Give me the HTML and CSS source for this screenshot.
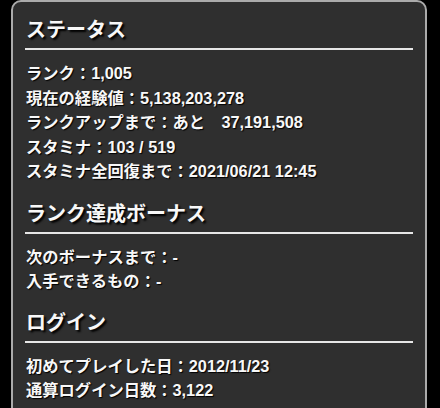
FILE: index.html
```html
<!DOCTYPE html>
<html lang="ja">
<head>
<meta charset="utf-8">
<link rel="stylesheet" href="styles.css">
</head>
<body>
<div class="panel">
  <section class="sec sec-first">
    <h2 class="title">ステータス</h2>
    <ul class="rows">
      <li>ランク：1,005</li>
      <li>現在の経験値：5,138,203,278</li>
      <li>ランクアップまで：あと　37,191,508</li>
      <li>スタミナ：103 / 519</li>
      <li>スタミナ全回復まで：2021/06/21 12:45</li>
    </ul>
  </section>
  <section class="sec">
    <h2 class="title">ランク達成ボーナス</h2>
    <ul class="rows">
      <li>次のボーナスまで：-</li>
      <li>入手できるもの：-</li>
    </ul>
  </section>
  <section class="sec sec-last">
    <h2 class="title">ログイン</h2>
    <ul class="rows">
      <li>初めてプレイした日：2012/11/23</li>
      <li>通算ログイン日数：3,122</li>
    </ul>
  </section>
</div>
</body>
</html>
```

FILE: styles.css
```css
html, body {
  margin: 0;
  padding: 0;
  background: #000;
  height: 100%;
  overflow: hidden;
}
body {
  font-family: "Liberation Sans", "Noto Sans CJK JP", sans-serif;
  font-weight: bold;
  color: #f8f8f8;
}
.panel {
  margin-left: 11px;
  width: 388px;
  min-height: 440px;
  border: 2px solid #ababab;
  border-radius: 10px;
  background: #2f2f2f;
  padding: 0 12px;
}
.sec {
  padding-top: 16px;
}
.sec-first {
  padding-top: 14px;
}
.sec-last {
  padding-top: 15px;
}
.title {
  margin: 0;
  font-size: 20px;
  line-height: 28px;
  padding: 0 0 4px 1px;
  border-bottom: 2px solid #e6e6e6;
  text-shadow: 2px 2px 2px #000;
  font-weight: bold;
}
.rows {
  list-style: none;
  margin: 11px 0 0;
  padding: 0 0 0 1px;
}
.rows li {
  font-size: 16.3px;
  line-height: 24.5px;
  white-space: nowrap;
  text-shadow: 1px 1px 1px #000;
}
```
